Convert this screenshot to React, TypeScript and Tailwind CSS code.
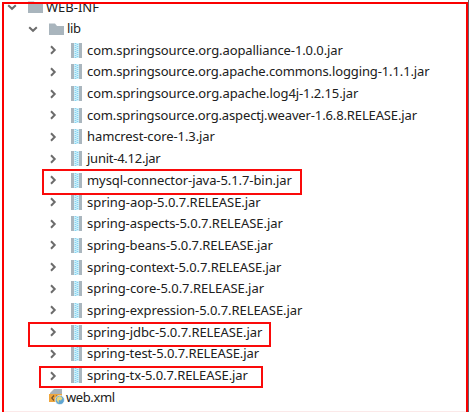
import React from "react";

type Row = { name: string; spacing: string };

const jars: Row[] = [
  { name: "com.springsource.org.aopalliance-1.0.0.jar", spacing: "tracking-[-0.1px]" },
  { name: "com.springsource.org.apache.commons.logging-1.1.1.jar", spacing: "tracking-[-0.12px]" },
  { name: "com.springsource.org.apache.log4j-1.2.15.jar", spacing: "tracking-[-0.1px]" },
  { name: "com.springsource.org.aspectj.weaver-1.6.8.RELEASE.jar", spacing: "tracking-[-0.13px]" },
  { name: "hamcrest-core-1.3.jar", spacing: "tracking-[-0.1px]" },
  { name: "junit-4.12.jar", spacing: "tracking-[-0.25px]" },
  { name: "mysql-connector-java-5.1.7-bin.jar", spacing: "tracking-[-0.08px]" },
  { name: "spring-aop-5.0.7.RELEASE.jar", spacing: "tracking-[-0.04px]" },
  { name: "spring-aspects-5.0.7.RELEASE.jar", spacing: "tracking-[-0.06px]" },
  { name: "spring-beans-5.0.7.RELEASE.jar", spacing: "tracking-[-0.09px]" },
  { name: "spring-context-5.0.7.RELEASE.jar", spacing: "tracking-[-0.09px]" },
  { name: "spring-core-5.0.7.RELEASE.jar", spacing: "tracking-[-0.04px]" },
  { name: "spring-expression-5.0.7.RELEASE.jar", spacing: "tracking-[-0.07px]" },
  { name: "spring-jdbc-5.0.7.RELEASE.jar", spacing: "tracking-[-0.07px]" },
  { name: "spring-test-5.0.7.RELEASE.jar", spacing: "tracking-[-0.09px]" },
  { name: "spring-tx-5.0.7.RELEASE.jar", spacing: "tracking-[-0.09px]" },
];

function Chevron({ open = false }: { open?: boolean }) {
  return (
    <svg width="10" height="10" viewBox="0 0 10 10" fill="none" stroke="#6c6c6c" strokeWidth="2" className="shrink-0">
      <path d={open ? "M1.2 3.2 5 6.8 8.8 3.2" : "M3 1.3 6.7 5 3 8.7"} />
    </svg>
  );
}

function Folder() {
  return (
    <svg width="15" height="12" viewBox="0 0 15 12" className="shrink-0">
      <path d="M0 0.5H6L8 3H15V12H0Z" fill="#a9b5bd" />
    </svg>
  );
}

function Jar() {
  return (
    <svg width="11" height="15" viewBox="0 0 11 15" className="shrink-0">
      <path d="M0 0H3V15H0ZM8 0H11V15H8Z" fill="#aab6be" />
      <path d="M3 0H8V15H3Z" fill="#d2f1fb" />
      <path d="M4.5 0V15" stroke="#85d3f0" strokeWidth="1.6" strokeDasharray="1 1" />
      <path d="M6.5 1V15" stroke="#85d3f0" strokeWidth="1.6" strokeDasharray="1 1" />
    </svg>
  );
}

function XmlFile() {
  return (
    <svg width="16" height="16" viewBox="0 0 16 16" className="shrink-0">
      <path d="M5 0H13V5H1V4Z" fill="#a9b2b8" />
      <path d="M0 5H13V13H0Z" fill="#efa63c" />
      <path d="M5 6.5 2.8 9 5 11.5M7.5 6.5 9.5 9" fill="none" stroke="#6d5030" strokeWidth="1.2" />
      <circle cx="10.8" cy="11" r="4.6" fill="#5fa5d2" stroke="#fff" strokeWidth=".6" />
      <path d="M8 8.5 11 7 13.5 9 12 11.5 10 11 9.5 14 7.5 11Z" fill="#e7d77e" />
    </svg>
  );
}

export default function App() {
  return (
    <div className="relative h-[412px] w-[469px] overflow-hidden bg-white font-['Noto_Sans','Open_Sans',sans-serif] text-[13px] leading-none whitespace-nowrap text-[#202020]">
      <div className="-mt-1">
        <div className="flex h-[21.7px] items-center pl-[7px]">
          <Chevron open />
          <span className="ml-[11px] flex"><Folder /></span>
          <span className="ml-[3px] pt-px">WEB-INF</span>
        </div>
        <div className="flex h-[21.7px] items-center pl-[28px]">
          <Chevron open />
          <span className="ml-[11px] flex"><Folder /></span>
          <span className="ml-[3px] tracking-[-0.4px]">lib</span>
        </div>
        {jars.map((jar) => (
          <div key={jar.name} className="flex h-[21.7px] items-center pl-[48px]">
            <Chevron />
            <span className="ml-[13px] flex"><Jar /></span>
            <span className={"ml-[5px] " + jar.spacing}>{jar.name}</span>
          </div>
        ))}
        <div className="flex h-[21.7px] items-center pl-[49px]">
          <XmlFile />
          <span className="ml-px tracking-[-0.4px]">web.xml</span>
        </div>
      </div>
      <div className="absolute top-[2px] left-[2px] h-[420px] w-[466px] border-2 border-[#fa0000]" />
      <div className="absolute top-0 right-0 h-full w-px bg-[#66616b]" />
      <div className="absolute top-[411px] left-[4px] h-px w-[462px] bg-[#fbe9e9]" />
      <div className="absolute top-[169px] left-[42px] h-[26px] w-[260px] border-2 border-[#fa0a0a]" />
      <div className="absolute top-[322px] left-[28px] h-[25px] w-[243px] border-2 border-[#fa0a0a]" />
      <div className="absolute top-[366px] left-[39px] h-[22px] w-[224px] border-2 border-[#fa0a0a]" />
    </div>
  );
}
